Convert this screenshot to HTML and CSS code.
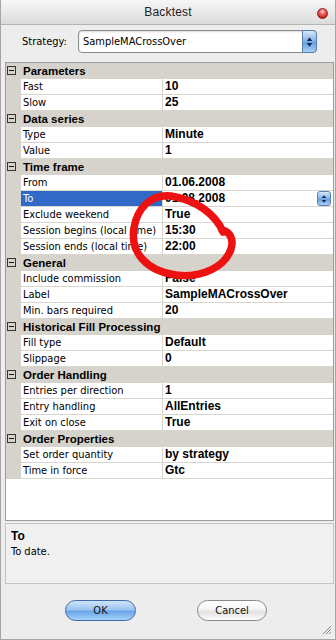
FILE: index.html
```html
<!DOCTYPE html>
<html>
<head>
<meta charset="utf-8">
<link rel="stylesheet" href="styles.css">
</head>
<body>
<div class="window">
  <div class="titlebar">
    <span class="title">Backtest</span>
    <span class="close"></span>
  </div>
  <div class="content">
    <div class="strategy-row">
      <span class="label">Strategy:</span>
      <div class="select">
        <span class="select-text">SampleMACrossOver</span>
        <span class="stepper big"><svg width="14" height="20" viewBox="0 0 14 20"><path d="M7 5 L10 9 L4 9 Z M7 15 L10 11 L4 11 Z" fill="#1a2a40"/></svg></span>
      </div>
    </div>

    <div class="grid">
      <div class="cat"><span class="gut"><span class="minus"></span></span><span class="cat-name">Parameters</span></div>
      <div class="row"><span class="gut"></span><span class="name">Fast</span><span class="val">10</span></div>
      <div class="row"><span class="gut"></span><span class="name">Slow</span><span class="val">25</span></div>
      <div class="cat"><span class="gut"><span class="minus"></span></span><span class="cat-name">Data series</span></div>
      <div class="row"><span class="gut"></span><span class="name">Type</span><span class="val">Minute</span></div>
      <div class="row"><span class="gut"></span><span class="name">Value</span><span class="val">1</span></div>
      <div class="cat"><span class="gut"><span class="minus"></span></span><span class="cat-name">Time frame</span></div>
      <div class="row"><span class="gut"></span><span class="name">From</span><span class="val">01.06.2008</span></div>
      <div class="row sel"><span class="gut"></span><span class="name">To</span><span class="val">01.08.2008<span class="stepper small"><svg width="13" height="14" viewBox="0 0 13 14"><path d="M6.5 3 L9 6 L4 6 Z M6.5 11 L9 8 L4 8 Z" fill="#1a2a40"/></svg></span></span></div>
      <div class="row"><span class="gut"></span><span class="name">Exclude weekend</span><span class="val">True</span></div>
      <div class="row"><span class="gut"></span><span class="name">Session begins (local time)</span><span class="val">15:30</span></div>
      <div class="row"><span class="gut"></span><span class="name">Session ends (local time)</span><span class="val">22:00</span></div>
      <div class="cat"><span class="gut"><span class="minus"></span></span><span class="cat-name">General</span></div>
      <div class="row"><span class="gut"></span><span class="name">Include commission</span><span class="val">False</span></div>
      <div class="row"><span class="gut"></span><span class="name">Label</span><span class="val">SampleMACrossOver</span></div>
      <div class="row"><span class="gut"></span><span class="name">Min. bars required</span><span class="val">20</span></div>
      <div class="cat"><span class="gut"><span class="minus"></span></span><span class="cat-name">Historical Fill Processing</span></div>
      <div class="row"><span class="gut"></span><span class="name">Fill type</span><span class="val">Default</span></div>
      <div class="row"><span class="gut"></span><span class="name">Slippage</span><span class="val">0</span></div>
      <div class="cat"><span class="gut"><span class="minus"></span></span><span class="cat-name">Order Handling</span></div>
      <div class="row"><span class="gut"></span><span class="name">Entries per direction</span><span class="val">1</span></div>
      <div class="row"><span class="gut"></span><span class="name">Entry handling</span><span class="val">AllEntries</span></div>
      <div class="row"><span class="gut"></span><span class="name">Exit on close</span><span class="val">True</span></div>
      <div class="cat"><span class="gut"><span class="minus"></span></span><span class="cat-name">Order Properties</span></div>
      <div class="row"><span class="gut"></span><span class="name">Set order quantity</span><span class="val">by strategy</span></div>
      <div class="row"><span class="gut"></span><span class="name">Time in force</span><span class="val">Gtc</span></div>
    </div>

    <div class="desc">
      <div class="desc-title">To</div>
      <div class="desc-text">To date.</div>
    </div>

    <div class="buttons">
      <button class="btn ok">OK</button>
      <button class="btn cancel">Cancel</button>
    </div>
  </div>
  <svg class="grip" width="10" height="10" viewBox="0 0 10 10"><path d="M9 1 L1 9 M9 4 L4 9 M9 7 L7 9" stroke="#8a8a8a" stroke-width="1"/></svg>
  <svg class="annot" width="336" height="640" viewBox="0 0 336 640"><path d="M223 232 C216 215 197 200 171 196 C150 194 137 209 134 228 C130 252 146 271 176 275 C202 278 225 267 231 249 C234 239 230 232 222 230" fill="none" stroke="#ee1111" stroke-width="7.5" stroke-linecap="round" stroke-linejoin="round"/></svg>
</div>
</body>
</html>
```

FILE: styles.css
```css
* { box-sizing: border-box; }
html, body { margin: 0; padding: 0; }
body {
  width: 336px;
  height: 640px;
  overflow: hidden;
  background: #ececec;
  font-family: "DejaVu Sans Condensed", "Liberation Sans", sans-serif;
  font-size: 11px;
  color: #000;
}
.window {
  position: relative;
  width: 336px;
  height: 640px;
  border: 1px solid #a6a6a6;
  border-top: none;
  background: #ededed;
  display: flex;
  flex-direction: column;
}
.titlebar {
  height: 25px;
  flex: none;
  background: linear-gradient(#f6f6f6, #dcdcdc);
  border-bottom: 1px solid #b4b4b4;
  display: flex;
  align-items: center;
  justify-content: center;
  position: relative;
}
.title {
  font-family: "Liberation Sans", sans-serif;
  font-size: 12px;
  letter-spacing: 0.2px;
  color: #222;
}
.close {
  position: absolute;
  right: 7px;
  top: 8px;
  width: 11px;
  height: 11px;
  border-radius: 50%;
  background: radial-gradient(circle at 50% 30%, #ffd0d0 0, #f06060 35%, #c41818 80%);
  border: 1px solid #8a2020;
}
.content {
  flex: 1;
  padding: 5px 1px 0 4px;
  display: flex;
  flex-direction: column;
}
.strategy-row {
  height: 23px;
  display: flex;
  align-items: center;
}
.label {
  width: 73px;
  padding-left: 17px;
}
.select {
  width: 239px;
  height: 23px;
  border: 1px solid #8c8c8c;
  border-radius: 4px;
  background: #fff;
  box-shadow: inset 0 1px 2px rgba(0,0,0,0.15);
  display: flex;
  align-items: center;
  justify-content: space-between;
  padding-left: 4px;
}
.stepper {
  display: flex;
  align-items: center;
  justify-content: center;
  background: linear-gradient(#d6e8fb, #7fb2ea 50%, #5e9be0 51%, #a9cff5);
  border: 1px solid #5a7fae;
}
.stepper.big {
  width: 15px;
  height: 23px;
  margin: -1px -1px -1px 0;
  border-radius: 0 4px 4px 0;
}
.stepper.small {
  position: absolute;
  right: 2px;
  top: 0;
  width: 14px;
  height: 15px;
  border-radius: 3px;
}
.grid {
  margin-top: 9px;
  height: 459px;
  width: 329px;
  border: 1px solid #9c9c9c;
  background: #fff;
  flex: none;
}
.row, .cat {
  height: 16px;
  display: grid;
  grid-template-columns: 15px 142px 1fr;
  align-items: stretch;
}
.cat {
  background: #d6d3cc;
  grid-template-columns: 15px 1fr;
}
.gut {
  background: #d6d3cc;
  display: flex;
  align-items: center;
}
.minus {
  margin-left: 1px;
  margin-top: -1px;
  width: 9px;
  height: 9px;
  border: 1px solid #333;
  position: relative;
}
.minus::after {
  content: "";
  position: absolute;
  left: 1px;
  top: 3px;
  width: 5px;
  height: 1px;
  background: #111;
}
.cat-name {
  font-family: "Liberation Sans", sans-serif;
  font-weight: bold;
  font-size: 11.5px;
  line-height: 16px;
  padding-left: 2px;
}
.name {
  border-bottom: 1px solid #d8d5cf;
  border-right: 1px solid #d8d5cf;
  padding-left: 2px;
  line-height: 15px;
  white-space: nowrap;
  overflow: hidden;
}
.val {
  border-bottom: 1px solid #d8d5cf;
  padding-left: 2px;
  font-family: "Liberation Sans", sans-serif;
  font-weight: bold;
  font-size: 12px;
  line-height: 15px;
  position: relative;
  white-space: nowrap;
}
.sel .name {
  background: #3169c6;
  color: #fff;
}
.desc {
  margin-top: 2px;
  height: 61px;
  width: 329px;
  border: 1px solid #c4c4c4;
  background: #f0f0f0;
  padding: 4px 0 0 5px;
  flex: none;
}
.desc-title {
  font-family: "Liberation Sans", sans-serif;
  font-weight: bold;
  font-size: 12px;
  line-height: 16px;
}
.desc-text {
  line-height: 16px;
}
.buttons {
  margin-top: 16px;
  display: flex;
  padding-left: 60px;
  gap: 61px;
}
.btn {
  height: 21px;
  border-radius: 11px;
  font-family: "DejaVu Sans Condensed", "Liberation Sans", sans-serif;
  font-size: 11px;
  padding: 0;
  color: #111;
}
.btn.ok {
  width: 71px;
  border: 1px solid #3f6aa6;
  background: linear-gradient(#cfe3fa 0, #9cc6f2 45%, #6aa6ea 55%, #a6d2fb 100%);
}
.btn.cancel {
  width: 70px;
  border: 1px solid #8a8a8a;
  background: linear-gradient(#ffffff 0, #f4f4f4 45%, #e2e2e2 55%, #fbfbfb 100%);
}
.grip {
  position: absolute;
  right: 3px;
  bottom: 4px;
}
.annot {
  position: absolute;
  left: -1px;
  top: 0;
  pointer-events: none;
}
```
